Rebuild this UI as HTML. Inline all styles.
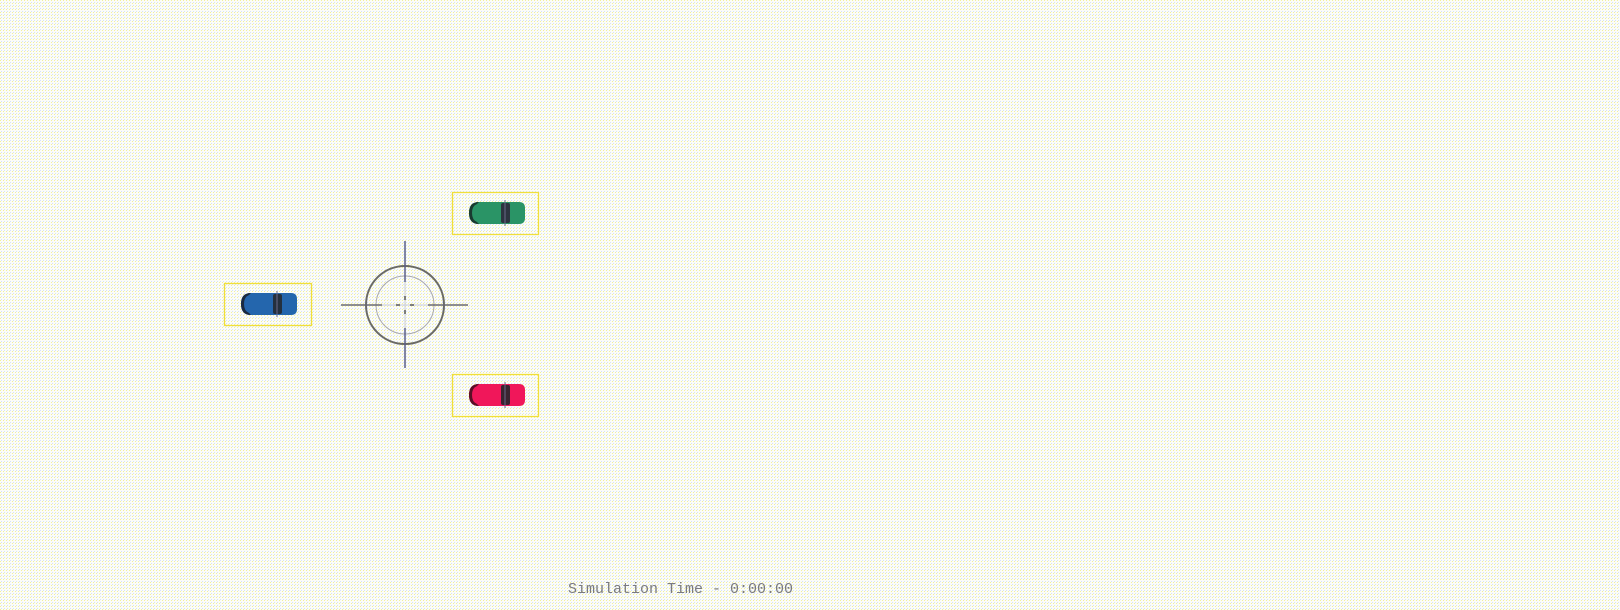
<!DOCTYPE html>
<html><head><meta charset="utf-8"><style>
html,body{margin:0;padding:0;width:1620px;height:610px;overflow:hidden;background:#f8f9f2}
svg{position:absolute;left:0;top:0}
</style></head><body>
<svg width="1620" height="610" xmlns="http://www.w3.org/2000/svg">
<defs>
<pattern id="d" width="3" height="3" patternUnits="userSpaceOnUse">
<rect width="3" height="3" fill="#fbfcf8"/>
<rect x="0" y="0" width="1" height="1" fill="#f2ef9c"/>
<rect x="1" y="2" width="1" height="1" fill="#d6e2f6"/>
</pattern>
</defs>
<rect width="1620" height="610" fill="url(#d)"/>
<g fill="none">
<circle cx="405" cy="305" r="39" stroke="#6a6a66" stroke-width="2"/>
<circle cx="405" cy="305" r="29" stroke="#a8a8b0" stroke-width="1"/>
<line x1="341" y1="305" x2="382" y2="305" stroke="#6a6a70" stroke-width="1.5"/>
<line x1="428" y1="305" x2="468" y2="305" stroke="#6a6a70" stroke-width="1.5"/>
<line x1="405" y1="241" x2="405" y2="282" stroke="#5a5f8a" stroke-width="1.5"/>
<line x1="405" y1="328" x2="405" y2="368" stroke="#5a5f8a" stroke-width="1.5"/>
<line x1="382" y1="305" x2="428" y2="305" stroke="#c8ccd8" stroke-width="1"/>
<line x1="405" y1="282" x2="405" y2="328" stroke="#c8ccd8" stroke-width="1"/>
<line x1="396" y1="305" x2="400" y2="305" stroke="#555" stroke-width="1.5"/>
<line x1="410" y1="305" x2="414" y2="305" stroke="#555" stroke-width="1.5"/>
<line x1="405" y1="296" x2="405" y2="300" stroke="#555" stroke-width="1.5"/>
<line x1="405" y1="310" x2="405" y2="314" stroke="#555" stroke-width="1.5"/>
</g>
<g fill="none" stroke="#f0df3a" stroke-width="1.3">
<rect x="452.5" y="192.5" width="86" height="42"/>
<rect x="224.5" y="283.5" width="87" height="42"/>
<rect x="452.5" y="374.5" width="86" height="42"/>
</g>
<g transform="translate(469,202)">
<path d="M10 0 L50 0 Q56 0 56 6 L56 16 Q56 22 50 22 L10 22 Q0 22 0 11 Q0 0 10 0Z" fill="#2a9466"/>
<path d="M10 0 Q0 0 0 11 Q0 22 10 22 L8 20 Q3 18 3 11 Q3 4 8 2Z" fill="#1a3a30"/>
<rect x="32" y="1" width="9" height="20" rx="2" fill="#2c3440"/>
<line x1="36" y1="-2" x2="36" y2="24" stroke="#6a6a8a" stroke-width="1"/>
</g>
<g transform="translate(241,293)">
<path d="M10 0 L50 0 Q56 0 56 6 L56 16 Q56 22 50 22 L10 22 Q0 22 0 11 Q0 0 10 0Z" fill="#2466ad"/>
<path d="M10 0 Q0 0 0 11 Q0 22 10 22 L8 20 Q3 18 3 11 Q3 4 8 2Z" fill="#1a2a40"/>
<rect x="32" y="1" width="9" height="20" rx="2" fill="#24303e"/>
<line x1="36" y1="-2" x2="36" y2="24" stroke="#6a6a8a" stroke-width="1"/>
</g>
<g transform="translate(469,384)">
<path d="M10 0 L50 0 Q56 0 56 6 L56 16 Q56 22 50 22 L10 22 Q0 22 0 11 Q0 0 10 0Z" fill="#f0175a"/>
<path d="M10 0 Q0 0 0 11 Q0 22 10 22 L8 20 Q3 18 3 11 Q3 4 8 2Z" fill="#5a1026"/>
<rect x="32" y="1" width="9" height="20" rx="2" fill="#3a2430"/>
<line x1="36" y1="-2" x2="36" y2="24" stroke="#6a6a8a" stroke-width="1"/>
</g>
<text x="568" y="593" font-family="Liberation Mono, DejaVu Sans Mono, monospace" font-size="15" fill="#7a7a80">Simulation Time - 0:00:00</text>
</svg>
</body></html>
